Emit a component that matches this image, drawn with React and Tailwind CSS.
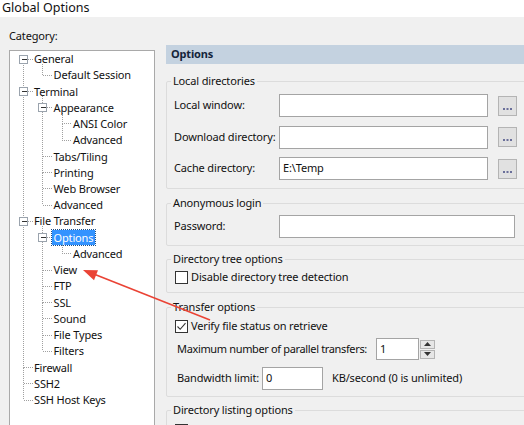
import React from 'react';

const font = { fontFamily: '"Noto Sans", "Open Sans", sans-serif' };

const tree = [
  { t: 'General', l: 0, c: true },
  { t: 'Default Session', l: 1 },
  { t: 'Terminal', l: 0, c: true },
  { t: 'Appearance', l: 1, c: true },
  { t: 'ANSI Color', l: 2 },
  { t: 'Advanced', l: 2 },
  { t: 'Tabs/Tiling', l: 1 },
  { t: 'Printing', l: 1 },
  { t: 'Web Browser', l: 1 },
  { t: 'Advanced', l: 1 },
  { t: 'File Transfer', l: 0, c: true },
  { t: 'Options', l: 1, c: true, sel: true },
  { t: 'Advanced', l: 2 },
  { t: 'View', l: 1 },
  { t: 'FTP', l: 1 },
  { t: 'SSL', l: 1 },
  { t: 'Sound', l: 1 },
  { t: 'File Types', l: 1 },
  { t: 'Filters', l: 1 },
  { t: 'Firewall', l: 0 },
  { t: 'SSH2', l: 0 },
  { t: 'SSH Host Keys', l: 0 },
];

const ROW = 16.24;
const indent = ['pl-[22px]', 'pl-[41.5px]', 'pl-[61px]'];
const lx = l => 13.5 + 19.4 * l;
const cy = i => 8 + ROW * i;

// dotted connector lines + expand boxes
function TreeLines() {
  const segs = [];
  tree.forEach((n, i) => {
    // vertical segment from previous sibling (or parent) to this node
    for (let j = i - 1; j >= 0; j--) {
      if (tree[j].l === n.l) {
        segs.push(<line key={'v' + i} x1={lx(n.l)} y1={cy(j)} x2={lx(n.l)} y2={cy(i)} />);
        break;
      }
      if (tree[j].l < n.l) {
        segs.push(<line key={'v' + i} x1={lx(n.l)} y1={cy(j) + 5} x2={lx(n.l)} y2={cy(i)} />);
        break;
      }
    }
    segs.push(<line key={'h' + i} x1={lx(n.l)} y1={cy(i)} x2={lx(n.l) + 9} y2={cy(i)} />);
  });
  return (
    <svg className="absolute inset-0 w-full h-full pointer-events-none" width="144" height="380">
      <g stroke="#a0a0a0" strokeWidth="1" strokeDasharray="1 1" shapeRendering="crispEdges">{segs}</g>
      {tree.map((n, i) =>
        n.c ? (
          <g key={'b' + i} shapeRendering="crispEdges">
            <rect x={lx(n.l) - 4} y={cy(i) - 4} width="8" height="8" fill="#fff" stroke="#9aa3ad" />
            <line x1={lx(n.l) - 2} y1={cy(i)} x2={lx(n.l) + 3} y2={cy(i)} stroke="#333" />
          </g>
        ) : null
      )}
    </svg>
  );
}

function TextBox({ w, value, h = 'h-[23px]' }) {
  return (
    <div className={`${w} ${h} bg-white border border-[#a4a4a4] flex items-center px-[3px]`}>
      {value}
    </div>
  );
}

function Browse() {
  return (
    <div className="w-[19px] h-[20px] ml-[10px] bg-[#e1e1e1] border border-[#b4b4b4] flex items-end justify-center pb-[5px]">
      <svg width="9" height="2">
        <rect x="0" y="0" width="2" height="2" fill="#6a6f9a" />
        <rect x="3.5" y="0" width="2" height="2" fill="#6a6f9a" />
        <rect x="7" y="0" width="2" height="2" fill="#6a6f9a" />
      </svg>
    </div>
  );
}

function CheckBox({ checked }) {
  return (
    <div className="w-[13px] h-[13px] bg-white border border-[#333] flex items-center justify-center shrink-0">
      {checked && (
        <svg width="11" height="11" viewBox="0 0 11 11">
          <path d="M1.5 5.5 L4.2 8.3 L9.5 2.2" fill="none" stroke="#333" strokeWidth="1.1" />
        </svg>
      )}
    </div>
  );
}

function Group({ title, className, children }) {
  return (
    <fieldset className={`border border-[#dcdcdc] rounded-[2px] p-0 m-0 ${className}`}>
      <legend className="ml-[4px] px-[2px] leading-[16px]">{title}</legend>
      {children}
    </fieldset>
  );
}

export default function App() {
  return (
    <div
      className="w-[524px] h-[425px] overflow-hidden bg-[#f0f0f0] text-[#111] text-[11px] tracking-[-0.15px] relative"
      style={font}
    >
      {/* title bar */}
      <div className="h-[17px] bg-white pl-[2px] text-[12.5px] leading-[16px] tracking-normal">Global Options</div>

      <div className="flex">
        {/* category tree */}
        <div className="w-[165px] shrink-0 pl-[9px] pt-[11px]">
          <div className="leading-[16px]">Category:</div>
          <div className="mt-[6px] w-[146px] h-[400px] bg-white border border-[#a9a9a9] relative">
            <TreeLines />
            <div className="relative -mt-[0.5px]">
              {tree.map((n, i) => (
                <div key={i} className={`h-[16.24px] flex items-center ${indent[n.l]}`}>
                  <span
                    className={
                      n.sel
                        ? 'px-[2px] leading-[15px] bg-[#3393ff] text-white outline outline-1 outline-dotted outline-[#1a4f8a]'
                        : 'px-[2px] leading-[15px]'
                    }
                  >
                    {n.t}
                  </span>
                </div>
              ))}
            </div>
          </div>
        </div>

        {/* options panel */}
        <div className="w-[370px] shrink-0 pt-[28px] pl-[1px]">
          <div className="h-[19px] bg-[#c4d2e0] pl-[5px] flex items-center font-bold text-[#14243a]">
            Options
          </div>

          <Group title="Local directories" className="mt-[9px]">
            <div className="pl-[7px] pt-[5px] pb-[8px] flex flex-col gap-[8.5px]">
              <div className="flex items-center">
                <div className="w-[105px] whitespace-nowrap">Local window:</div>
                <TextBox w="w-[209px]" />
                <Browse />
              </div>
              <div className="flex items-center">
                <div className="w-[105px] whitespace-nowrap">Download directory:</div>
                <TextBox w="w-[209px]" />
                <Browse />
              </div>
              <div className="flex items-center">
                <div className="w-[105px] whitespace-nowrap">Cache directory:</div>
                <TextBox w="w-[209px]" value="E:\Temp" />
                <Browse />
              </div>
            </div>
          </Group>

          <Group title="Anonymous login" className="mt-[6px]">
            <div className="pl-[7px] pt-[4px] pb-[7px] flex items-center">
              <div className="w-[105px]">Password:</div>
              <TextBox w="w-[236px]" />
            </div>
          </Group>

          <Group title="Directory tree options" className="mt-[5px]">
            <div className="pl-[8px] pt-[2.5px] pb-[6.5px] h-[16px] box-content flex items-center gap-[3px]">
              <CheckBox />
              <span>Disable directory tree detection</span>
            </div>
          </Group>

          <Group title="Transfer options" className="mt-[6px]">
            <div className="pt-[3px] pb-[6px]">
              <div className="pl-[8px] h-[16px] flex items-center gap-[3px]">
                <CheckBox checked />
                <span>Verify file status on retrieve</span>
              </div>
              <div className="pl-[10px] mt-[4px] flex items-center">
                <div className="w-[199px] whitespace-nowrap tracking-[-0.35px]">Maximum number of parallel transfers:</div>
                <TextBox w="w-[43px]" h="h-[22px]" value="1" />
                <div className="w-[17px] h-[22px] flex flex-col justify-center gap-[1px] px-[1px]">
                  <div className="h-[9px] bg-[#e6e6e6] border border-[#b4b4b4] flex items-center justify-center">
                    <svg width="7" height="4"><path d="M0 4 L3.5 0 L7 4 Z" fill="#333" /></svg>
                  </div>
                  <div className="h-[9px] bg-[#e6e6e6] border border-[#b4b4b4] flex items-center justify-center">
                    <svg width="7" height="4"><path d="M0 0 L3.5 4 L7 0 Z" fill="#333" /></svg>
                  </div>
                </div>
              </div>
              <div className="pl-[10px] mt-[7px] flex items-center">
                <div className="w-[85px] whitespace-nowrap">Bandwidth limit:</div>
                <TextBox w="w-[61px]" value="0" />
                <span className="ml-[9px]">KB/second (0 is unlimited)</span>
              </div>
            </div>
          </Group>

          <Group title="Directory listing options" className="mt-[5px]">
            <div className="pl-[8px] pt-[4px] pb-[6px] flex items-center gap-[3px]">
              <CheckBox />
              <span>Use absolute path</span>
            </div>
          </Group>
        </div>
      </div>

      {/* red annotation arrow */}
      <svg className="absolute inset-0 pointer-events-none" width="524" height="425">
        <line x1="210" y1="320" x2="95" y2="274.5" stroke="#ea4335" strokeWidth="1.6" />
        <path d="M83 270 L98 270.2 L94 280.2 Z" fill="#ea4335" />
      </svg>
    </div>
  );
}
